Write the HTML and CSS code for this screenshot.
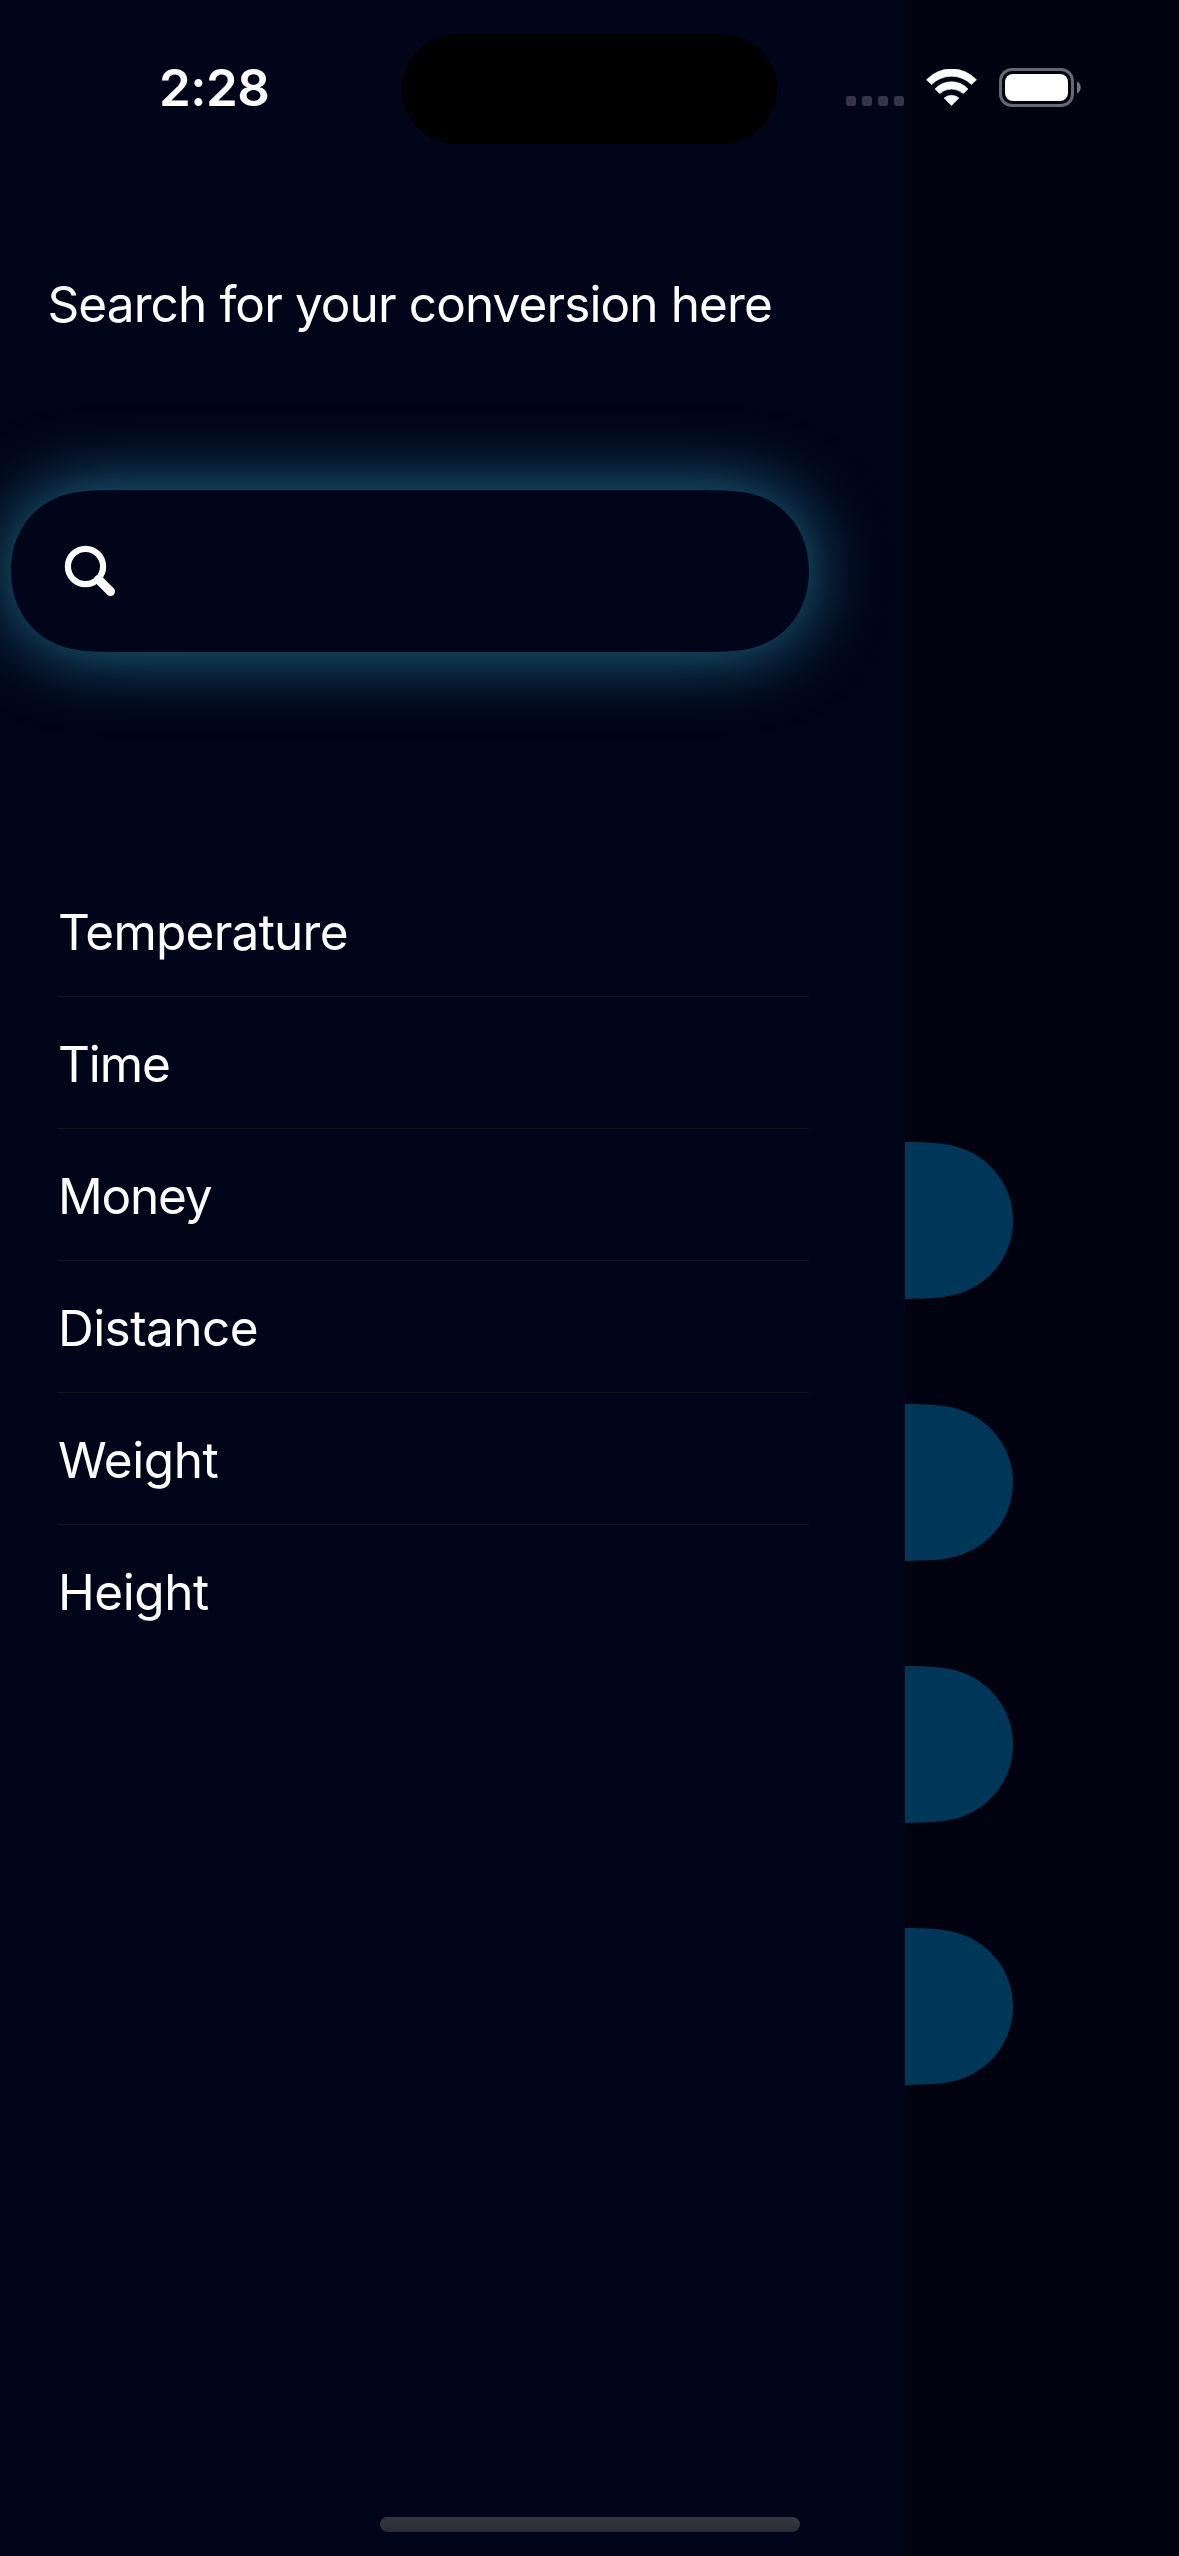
FILE: index.html
```html
<!DOCTYPE html>
<html lang="en">
<head>
<meta charset="utf-8">
<title>Converter</title>
<link rel="stylesheet" href="styles.css">
</head>
<body>
<div class="screen">
  <nav class="drawer">
    <h1 class="drawer-title"><span class="title-text">Search for your conversion here</span></h1>
    <div class="search">
      <svg class="search-shape" width="798" height="162" viewBox="0 0 798 162">
        <path d="M114.6 0H683.4C708 .2 724 0 740 3.8C775 12 798 42 798 81S775 150 740 158.2C724 162 708 161.8 683.4 162H114.6C90 161.8 74 162 58 158.2C23 150 0 120 0 81S23 12 58 3.8C74 0 90 .2 114.6 0Z"/>
      </svg>
      <svg class="search-icon" width="52" height="52" viewBox="0 0 52 52">
        <circle cx="21.5" cy="21.5" r="17.6"/>
        <path d="M34.5 34.5L46.5 46.5"/>
      </svg>
    </div>
    <ul class="list">
      <li class="row"><span class="w-temperature">Temperature</span></li>
      <li class="row"><span class="w-time">Time</span></li>
      <li class="row"><span class="w-money">Money</span></li>
      <li class="row"><span class="w-distance">Distance</span></li>
      <li class="row"><span class="w-weight">Weight</span></li>
      <li class="row"><span class="w-height">Height</span></li>
    </ul>
  </nav>
  <main class="page">
    <svg class="pill" viewBox="0 0 108 157"><path d="M-7 0C20 .2 36 .7 50 4.2C84 13 108 43 108 78.5S84 144 50 152.8C36 156.3 20 156.8 -7 157Z"/></svg>
    <svg class="pill" viewBox="0 0 108 157"><path d="M-7 0C20 .2 36 .7 50 4.2C84 13 108 43 108 78.5S84 144 50 152.8C36 156.3 20 156.8 -7 157Z"/></svg>
    <svg class="pill" viewBox="0 0 108 157"><path d="M-7 0C20 .2 36 .7 50 4.2C84 13 108 43 108 78.5S84 144 50 152.8C36 156.3 20 156.8 -7 157Z"/></svg>
    <svg class="pill" viewBox="0 0 108 157"><path d="M-7 0C20 .2 36 .7 50 4.2C84 13 108 43 108 78.5S84 144 50 152.8C36 156.3 20 156.8 -7 157Z"/></svg>
  </main>
  <header class="status">
    <time class="clock">2:28</time>
    <div class="island"></div>
    <div class="indicators">
      <div class="cell"><i></i><i></i><i></i><i></i></div>
      <svg class="wifi" width="51" height="37" viewBox="0 0 51 37">
        <path d="M.5 10.8A34 34 0 0 1 50.5 10.8L45.5 15.5A28.5 28.5 0 0 0 5.5 15.5Z"/>
        <path d="M9 20A22.3 22.3 0 0 1 42 20L37.3 24.6A17.7 17.7 0 0 0 13.7 24.6Z"/>
        <path d="M18 29A12 12 0 0 1 33 29L25.5 36.5Z"/>
      </svg>
      <svg class="battery" width="82" height="39" viewBox="0 0 82 39">
        <rect class="shell" x="1.5" y="1.5" width="72" height="36" rx="11.5"/>
        <rect x="6" y="6" width="63" height="27" rx="8"/>
        <path class="nub" d="M78 13.5C83 15.5 83 23.5 78 25.5Z"/>
      </svg>
    </div>
  </header>
  <div class="home"></div>
</div>
</body>
</html>
```
FILE: styles.css
```css
* { box-sizing: border-box; }
body { margin: 0; background: #000210; color: #fff; font-family: Inter, "Liberation Sans", sans-serif; }
.screen { position: relative; display: flex; width: 1179px; height: 2556px; overflow: hidden; }
.drawer { width: 905px; padding-top: 272px; background: #000519; }
.drawer-title { margin: 0 0 154px 47.5px; font-size: 49.5px; line-height: 64px; font-weight: 400; white-space: nowrap; }
.title-text { letter-spacing: -0.9px; }
.search { display: flex; align-items: center; margin-left: 11px; width: 798px; height: 162px; }
.search-shape { flex: none; overflow: visible; fill: #000519; filter: drop-shadow(0 0 36px rgb(34, 117, 145)); }
.search-icon { position: relative; flex: none; margin-left: -745px; fill: none; stroke: #fff; stroke-width: 6.2; stroke-linecap: round; }
.search-icon path { stroke-width: 9; }
.list { list-style: none; margin: 213px 96px 0 58px; padding: 0; }
.row { display: flex; align-items: center; height: 132px; padding: 3px 0 0; border-bottom: 1px solid #14151f; font-size: 49.5px; line-height: 64px; }
.row:last-child { border-bottom-color: transparent; }
.w-temperature { letter-spacing: -0.75px; }
.w-time { letter-spacing: -1.1px; }
.w-money { letter-spacing: -1.2px; }
.w-distance { letter-spacing: -0.55px; }
.w-weight, .w-height { letter-spacing: -0.45px; }
.page { flex: 1; display: flex; flex-direction: column; gap: 105px; padding-top: 1142px; background: #000210; }
.pill { display: block; flex: none; width: 108px; height: 157px; fill: #003759; }
.status { position: absolute; top: 0; left: 0; width: 1179px; height: 178px; }
.status { display: grid; grid-template-columns: 402px 375px 1fr; align-items: start; }
.clock { padding: 56px 0 0 159px; font-size: 51px; line-height: 64px; font-weight: 600; letter-spacing: -0.5px; }
.island { height: 110px; margin-top: 34px; border-radius: 55px; background: #000; }
.indicators { display: flex; align-items: flex-start; padding: 68px 0 0 69px; }
.cell { display: flex; gap: 6px; margin: 28px 22px 0 0; }
.cell i { width: 10px; height: 10px; border-radius: 3px; background: #353748; }
.wifi { margin: 1px 22px 0 0; fill: #fff; stroke: #fff; stroke-width: .6; stroke-linejoin: round; }
.wifi, .battery { flex: none; }
.battery { fill: #fff; }
.battery .shell { fill: none; stroke: #666773; stroke-width: 3; }
.battery .nub { fill: #73747f; }
.home { position: absolute; left: 380px; bottom: 24px; width: 420px; height: 15px; border-radius: 8px; background: linear-gradient(#37383f, #292b33); }
```
